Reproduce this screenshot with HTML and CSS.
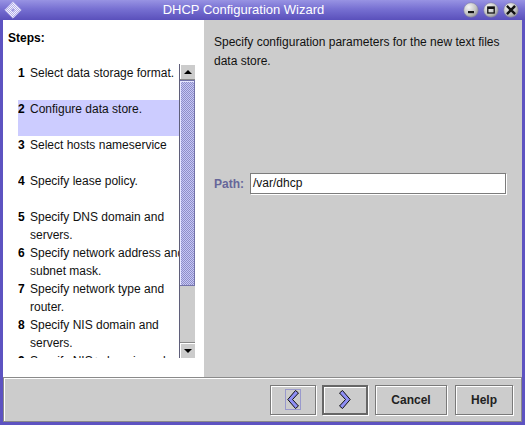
FILE: index.html
```html
<!DOCTYPE html>
<html>
<head>
<meta charset="utf-8">
<link rel="stylesheet" href="styles.css">
</head>
<body>
<div class="window">
  <div class="titlebar">
    <svg class="app-icon" width="18" height="18" viewBox="0 0 18 18">
      <defs>
        <pattern id="chk" width="2" height="2" patternUnits="userSpaceOnUse">
          <rect width="2" height="2" fill="#f4f3ff"/>
          <rect width="1" height="1" fill="#b4b0e8"/>
          <rect x="1" y="1" width="1" height="1" fill="#b4b0e8"/>
        </pattern>
      </defs>
      <polygon points="9,0.8 17.2,9 9,17.2 0.8,9" fill="url(#chk)" stroke="#cfcdf3" stroke-width="0.8"/>
      <circle cx="9" cy="9" r="1.6" fill="#a29ddf"/>
    </svg>
    <div class="title">DHCP Configuration Wizard</div>
    <div class="wm-buttons">
      <svg class="wm-btn" width="16" height="16" viewBox="0 0 16 16">
        <defs>
          <radialGradient id="ball" cx="0.35" cy="0.3" r="0.8">
            <stop offset="0" stop-color="#f4f4f4"/>
            <stop offset="0.6" stop-color="#c4c4c4"/>
            <stop offset="1" stop-color="#8a8a8a"/>
          </radialGradient>
        </defs>
        <circle cx="8" cy="8" r="7.3" fill="url(#ball)" stroke="#7a78a8" stroke-width="0.6"/>
        <rect x="5" y="9" width="6" height="2.2" fill="#111"/>
      </svg>
      <svg class="wm-btn" width="16" height="16" viewBox="0 0 16 16">
        <circle cx="8" cy="8" r="7.3" fill="url(#ball)" stroke="#7a78a8" stroke-width="0.6"/>
        <rect x="4.8" y="5" width="6.4" height="6" fill="none" stroke="#111" stroke-width="1.3"/>
        <rect x="4.8" y="5" width="6.4" height="2" fill="#111"/>
      </svg>
      <svg class="wm-btn" width="16" height="16" viewBox="0 0 16 16">
        <circle cx="8" cy="8" r="7.3" fill="url(#ball)" stroke="#7a78a8" stroke-width="0.6"/>
        <path d="M4.8 4.8 L11.2 11.2 M11.2 4.8 L4.8 11.2" stroke="#111" stroke-width="2.4" stroke-linecap="square"/>
      </svg>
    </div>
  </div>
  <div class="frame">
    <div class="main">
      <div class="steps">
        <div class="steps-title">Steps:</div>
        <div class="list">
          <div class="items">
            <div class="row"><span class="num">1</span><span class="txt">Select data storage format.</span></div>
            <div class="row selected"><span class="num">2</span><span class="txt">Configure data store.</span></div>
            <div class="row"><span class="num">3</span><span class="txt">Select hosts nameservice</span></div>
            <div class="row"><span class="num">4</span><span class="txt">Specify lease policy.</span></div>
            <div class="row"><span class="num">5</span><span class="txt">Specify DNS domain and<br>servers.</span></div>
            <div class="row"><span class="num">6</span><span class="txt">Specify network address and<br>subnet mask.</span></div>
            <div class="row"><span class="num">7</span><span class="txt">Specify network type and<br>router.</span></div>
            <div class="row"><span class="num">8</span><span class="txt">Specify NIS domain and<br>servers.</span></div>
            <div class="row"><span class="num">9</span><span class="txt">Specify NIS+ domain and<br>servers.</span></div>
          </div>
          <div class="scrollbar">
            <div class="arrow-btn"><span class="tri-up"></span></div>
            <div class="thumb"></div>
            <div class="track"></div>
            <div class="arrow-btn down"><span class="tri-down"></span></div>
          </div>
        </div>
      </div>
      <div class="content">
        <p class="desc">Specify configuration parameters for the new text files<br>data store.</p>
        <div class="path-row">
          <span class="path-label">Path:</span>
          <div class="field">/var/dhcp</div>
        </div>
      </div>
    </div>
    <div class="footer">
      <button class="btn nav back"><span class="focus">
        <svg width="12" height="19" viewBox="0 0 12 19"><polygon points="8.5,0.5 11.5,3 5.5,9.5 11.5,16 8.5,18.5 0.8,9.5" fill="#8f8ff5" stroke="#111" stroke-width="1"/></svg>
      </span></button>
      <button class="btn nav next">
        <svg width="12" height="19" viewBox="0 0 12 19"><polygon points="3.5,0.5 0.5,3 6.5,9.5 0.5,16 3.5,18.5 11.2,9.5" fill="#8f8ff5" stroke="#111" stroke-width="1"/></svg>
      </button>
      <button class="btn cancel">Cancel</button>
      <button class="btn help">Help</button>
    </div>
  </div>
</div>
</body>
</html>
```
FILE: styles.css
```css
html, body {
  margin: 0;
  padding: 0;
}
body {
  font-family: "Liberation Sans", Arial, sans-serif;
  font-size: 12px;
  color: #000;
}
.window {
  width: 525px;
  height: 425px;
  background: #5d53c1;
  display: flex;
  flex-direction: column;
  overflow: hidden;
}
.titlebar {
  height: 20px;
  flex: none;
  display: flex;
  align-items: center;
  background: linear-gradient(#9893e3, #7770d2 45%, #5a50bb);
}
.app-icon {
  margin-left: 4px;
  flex: none;
}
.title {
  flex: 1;
  text-align: center;
  color: #fff;
  font-size: 13px;
  line-height: 20px;
  padding-left: 2px;
}
.wm-buttons {
  display: flex;
  gap: 4px;
  margin-right: 6px;
}
.wm-btn {
  display: block;
}
.frame {
  flex: 1;
  min-height: 0;
  margin: 0 3px 3px;
  display: flex;
  flex-direction: column;
}
.main {
  height: 357px;
  flex: none;
  display: flex;
  overflow: hidden;
}
.steps {
  width: 201px;
  flex: none;
  box-sizing: border-box;
  padding-top: 11px;
  background: #fff;
  display: flex;
  flex-direction: column;
}
.steps-title {
  padding-left: 5px;
  font-weight: bold;
  line-height: 15px;
  height: 15px;
  flex: none;
}
.list {
  margin: 18px 0 0 15px;
  width: 177px;
  height: 294px;
  flex: none;
  display: flex;
  overflow: hidden;
}
.items {
  width: 161px;
  flex: none;
  overflow: hidden;
}
.row {
  height: 36px;
  display: flex;
  line-height: 18px;
  white-space: nowrap;
}
.row.selected {
  background: #ccccff;
}
.num {
  width: 12px;
  flex: none;
  font-weight: bold;
}
.txt {
  color: #111;
}
.scrollbar {
  width: 15px;
  flex: none;
  border-left: 1px solid #5f5f7a;
  display: flex;
  flex-direction: column;
  background: #cccccc;
}
.arrow-btn {
  height: 16px;
  flex: none;
  box-sizing: border-box;
  background: #cccccc;
  border-bottom: 1px solid #8a8a8a;
  box-shadow: inset 1px 1px 0 #fff;
  display: flex;
  align-items: center;
  justify-content: center;
}
.arrow-btn.down {
  border-bottom: none;
  border-top: 1px solid #8a8a8a;
}
.tri-up {
  width: 0;
  height: 0;
  border-left: 4px solid transparent;
  border-right: 4px solid transparent;
  border-bottom: 4px solid #000;
}
.tri-down {
  width: 0;
  height: 0;
  border-left: 4px solid transparent;
  border-right: 4px solid transparent;
  border-top: 4px solid #000;
}
.thumb {
  height: 206px;
  flex: none;
  box-sizing: border-box;
  border: 1px solid #7373aa;
  border-left: none;
  background-color: #c6c6f6;
  background-image: repeating-conic-gradient(#8f8fc8 0 25%, transparent 0 50%);
  background-size: 2px 2px;
  box-shadow: inset 1px 1px 0 #e6e6ff;
}
.track {
  flex: 1;
  background: #cccccc;
}
.content {
  flex: 1;
  background: #cccccc;
  padding: 13px 10px 0;
}
.desc {
  margin: 0;
  line-height: 19px;
  color: #111;
}
.path-row {
  margin-top: 102px;
  display: flex;
  align-items: center;
}
.path-label {
  font-weight: bold;
  color: #666699;
  margin-right: 6px;
}
.field {
  width: 256px;
  height: 21px;
  box-sizing: border-box;
  background: #fff;
  border: 1px solid #7c7c7c;
  box-shadow: 1px 1px 0 #fff;
  padding-left: 2px;
  line-height: 19px;
  color: #111;
}
.footer {
  height: 45px;
  flex: none;
  box-sizing: border-box;
  background: #cccccc;
  border: 1px solid #8a8a8a;
  box-shadow: inset 1px 1px 0 #fff;
  display: flex;
  align-items: center;
  justify-content: flex-end;
  padding-right: 8px;
}
.btn {
  height: 30px;
  box-sizing: border-box;
  margin: 0;
  padding: 0;
  background: #cccccc;
  border: 1px solid #7a7a7a;
  box-shadow: inset 1px 1px 0 #fff, 1px 1px 0 #fff;
  font-family: "Liberation Sans", Arial, sans-serif;
  font-weight: bold;
  font-size: 12px;
  color: #222;
  display: flex;
  align-items: center;
  justify-content: center;
}
.nav {
  width: 46px;
}
.back {
  margin-right: 6px;
}
.focus {
  display: flex;
  border: 1px solid #9999cc;
  padding: 0 1px;
}
.next {
  border: 2px solid #666666;
  margin-right: 7px;
}
.cancel {
  width: 72px;
  margin-right: 8px;
}
.help {
  width: 58px;
}
svg {
  display: block;
}
```
